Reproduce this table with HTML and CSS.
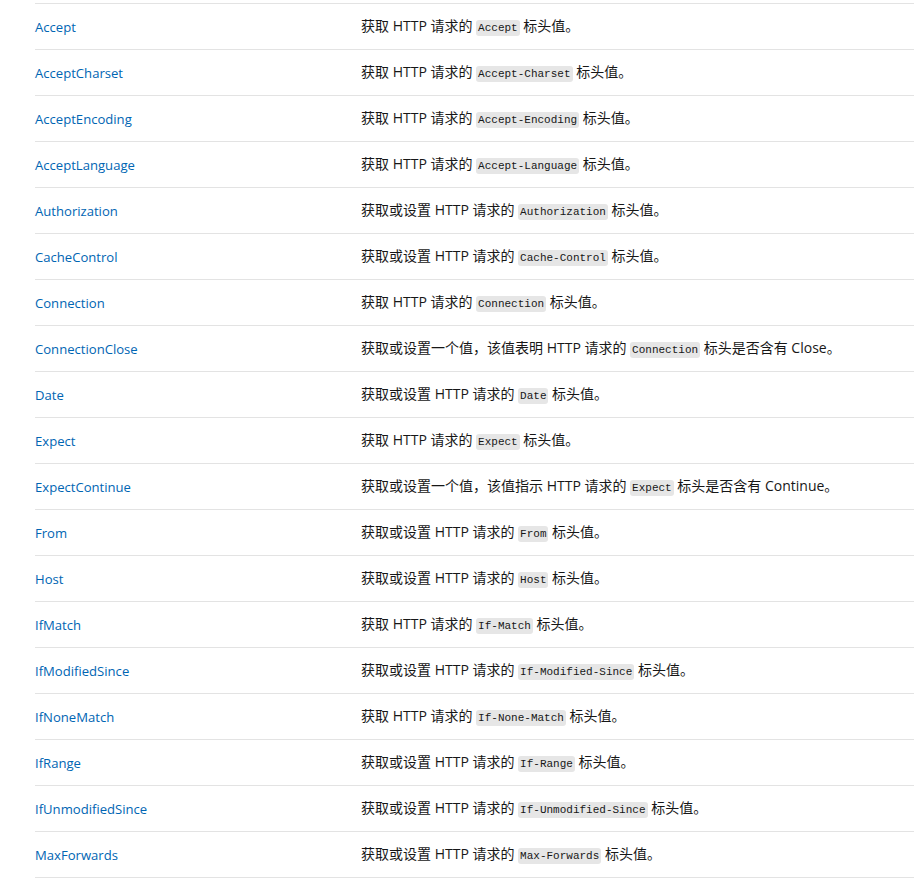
FILE: index.html
```html
<!DOCTYPE html>
<html lang="zh-CN">
<head>
<meta charset="utf-8">
<title>HttpRequestHeaders 属性</title>
<link rel="stylesheet" href="styles.css">
</head>
<body>
<table class="props">
<tbody>
<tr><td class="name"><a href="#">Accept</a></td><td class="desc">获取 HTTP 请求的 <code>Accept</code> 标头值。</td></tr>
<tr><td class="name"><a href="#">AcceptCharset</a></td><td class="desc">获取 HTTP 请求的 <code>Accept-Charset</code> 标头值。</td></tr>
<tr><td class="name"><a href="#">AcceptEncoding</a></td><td class="desc">获取 HTTP 请求的 <code>Accept-Encoding</code> 标头值。</td></tr>
<tr><td class="name"><a href="#">AcceptLanguage</a></td><td class="desc">获取 HTTP 请求的 <code>Accept-Language</code> 标头值。</td></tr>
<tr><td class="name"><a href="#">Authorization</a></td><td class="desc">获取或设置 HTTP 请求的 <code>Authorization</code> 标头值。</td></tr>
<tr><td class="name"><a href="#">CacheControl</a></td><td class="desc">获取或设置 HTTP 请求的 <code>Cache-Control</code> 标头值。</td></tr>
<tr><td class="name"><a href="#">Connection</a></td><td class="desc">获取 HTTP 请求的 <code>Connection</code> 标头值。</td></tr>
<tr><td class="name"><a href="#">ConnectionClose</a></td><td class="desc">获取或设置一个值，该值表明 HTTP 请求的 <code>Connection</code> 标头是否含有 Close。</td></tr>
<tr><td class="name"><a href="#">Date</a></td><td class="desc">获取或设置 HTTP 请求的 <code>Date</code> 标头值。</td></tr>
<tr><td class="name"><a href="#">Expect</a></td><td class="desc">获取 HTTP 请求的 <code>Expect</code> 标头值。</td></tr>
<tr><td class="name"><a href="#">ExpectContinue</a></td><td class="desc">获取或设置一个值，该值指示 HTTP 请求的 <code>Expect</code> 标头是否含有 Continue。</td></tr>
<tr><td class="name"><a href="#">From</a></td><td class="desc">获取或设置 HTTP 请求的 <code>From</code> 标头值。</td></tr>
<tr><td class="name"><a href="#">Host</a></td><td class="desc">获取或设置 HTTP 请求的 <code>Host</code> 标头值。</td></tr>
<tr><td class="name"><a href="#">IfMatch</a></td><td class="desc">获取 HTTP 请求的 <code>If-Match</code> 标头值。</td></tr>
<tr><td class="name"><a href="#">IfModifiedSince</a></td><td class="desc">获取或设置 HTTP 请求的 <code>If-Modified-Since</code> 标头值。</td></tr>
<tr><td class="name"><a href="#">IfNoneMatch</a></td><td class="desc">获取 HTTP 请求的 <code>If-None-Match</code> 标头值。</td></tr>
<tr><td class="name"><a href="#">IfRange</a></td><td class="desc">获取或设置 HTTP 请求的 <code>If-Range</code> 标头值。</td></tr>
<tr><td class="name"><a href="#">IfUnmodifiedSince</a></td><td class="desc">获取或设置 HTTP 请求的 <code>If-Unmodified-Since</code> 标头值。</td></tr>
<tr><td class="name"><a href="#">MaxForwards</a></td><td class="desc">获取或设置 HTTP 请求的 <code>Max-Forwards</code> 标头值。</td></tr>
</tbody>
</table>
</body>
</html>
```
FILE: styles.css
```css
html, body {
  margin: 0;
  padding: 0;
  background: #ffffff;
}
body {
  padding: 3px 0 0 35px;
  font-family: "Segoe UI", "Open Sans", "Noto Sans CJK SC", sans-serif;
  font-size: 14px;
  color: #171717;
  overflow: hidden;
}
.props {
  border-collapse: collapse;
  width: 900px;
}
.props tr {
  border-top: 1px solid #e3e3e3;
  border-bottom: 1px solid #e3e3e3;
}
.props td {
  height: 45px;
  padding: 0;
  vertical-align: middle;
  line-height: 20px;
}
.props td.name {
  width: 326px;
}
.props a {
  color: #0065b3;
  text-decoration: none;
  font-size: 13.1px;
}
.props code {
  font-family: "Liberation Mono", "DejaVu Sans Mono", monospace;
  font-size: 11px;
  background: #e6e6e6;
  color: #171717;
  padding: 2px 2px;
  border-radius: 3px;
}
```
